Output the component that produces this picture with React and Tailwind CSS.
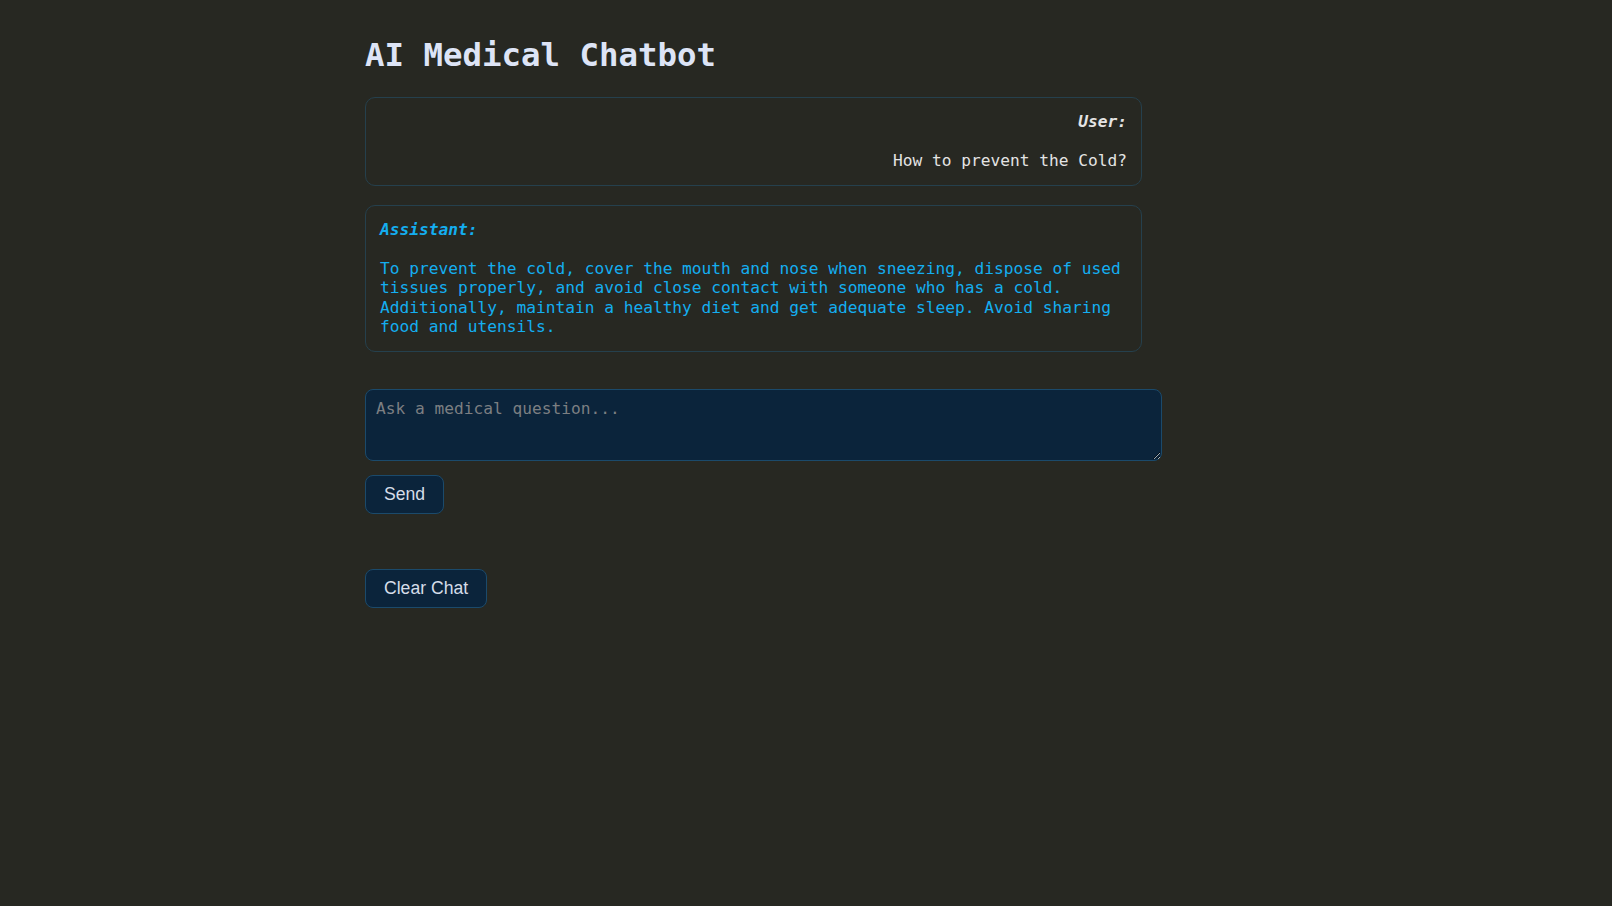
import React, { useState } from "react";

const mono = "font-['DejaVu_Sans_Mono','Liberation_Mono',monospace]";

const Message = ({ role, text }) => {
  const isUser = role === "user";
  return (
    <div
      className={`w-[777px] rounded-[10px] border border-[#25404d] px-[14px] pt-[14px] pb-[14px] ${
        isUser ? "text-right text-[#e4e4e4]" : "text-left text-[#14aef0]"
      }`}
    >
      <div className="font-bold italic leading-[20px]">
        {isUser ? "User:" : "Assistant:"}
      </div>
      <p className="mt-[19px] leading-[19.6px]">{text}</p>
    </div>
  );
};

export default function App() {
  const [input, setInput] = useState("");
  const [messages, setMessages] = useState([
    { role: "user", text: "How to prevent the Cold?" },
    {
      role: "assistant",
      text: "To prevent the cold, cover the mouth and nose when sneezing, dispose of used tissues properly, and avoid close contact with someone who has a cold. Additionally, maintain a healthy diet and get adequate sleep. Avoid sharing food and utensils.",
    },
  ]);

  const send = () => {
    if (!input.trim()) return;
    setMessages([...messages, { role: "user", text: input }]);
    setInput("");
  };

  return (
    <div className={`min-h-[906px] bg-[#272822] ${mono} text-[16.2px]`}>
      <div className="mx-auto w-[882px] pt-[36px]">
        <h1 className="text-[32.4px] font-bold leading-[38px] text-[#dde4f6]">
          AI Medical Chatbot
        </h1>

        <div className="mt-[23px] flex flex-col gap-[19px]">
          {messages.map((m, i) => (
            <Message key={i} role={m.role} text={m.text} />
          ))}
        </div>

        <textarea
          value={input}
          onChange={(e) => setInput(e.target.value)}
          placeholder="Ask a medical question..."
          className="mt-[37px] block h-[72px] w-[797px] rounded-[8px] border border-[#1b4a6b] bg-[#0b243b] px-[10px] py-[9px] leading-[20px] text-[#e4e4e4] placeholder:text-[#7c7f82] outline-none"
        />

        <button
          onClick={send}
          className="mt-[14px] block rounded-[8px] border border-[#1b4a6b] bg-[#0b243b] px-[18px] py-[9px] font-['Liberation_Sans',Arial,sans-serif] text-[17.6px] leading-[19px] text-[#d6dde9]"
        >
          Send
        </button>

        <button
          onClick={() => setMessages([])}
          className="mt-[55px] block rounded-[8px] border border-[#1b4a6b] bg-[#0b243b] px-[18px] py-[9px] font-['Liberation_Sans',Arial,sans-serif] text-[17.6px] leading-[19px] text-[#d6dde9]"
        >
          Clear Chat
        </button>
      </div>
    </div>
  );
}
